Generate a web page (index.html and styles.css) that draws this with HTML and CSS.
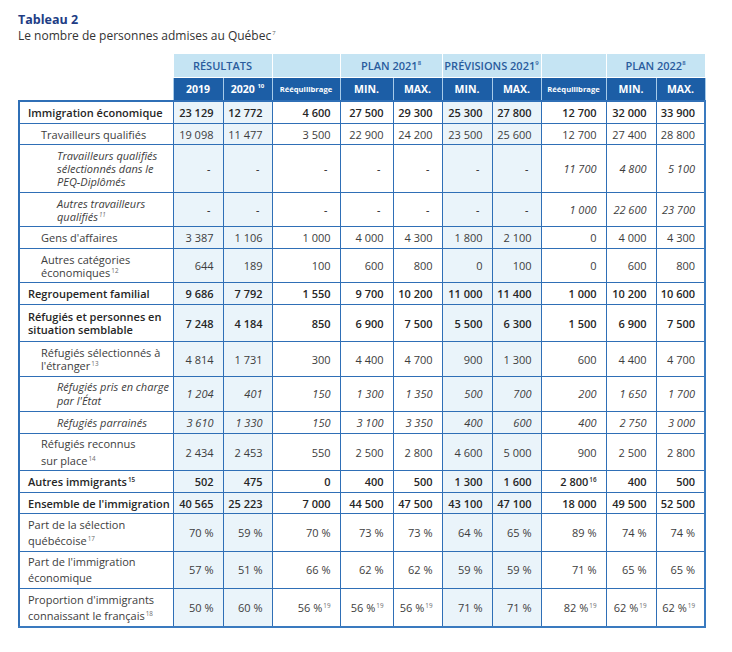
FILE: index.html
```html
<!DOCTYPE html>
<html lang="fr">
<head>
<meta charset="utf-8">
<title>Tableau 2</title>
<link rel="stylesheet" href="styles.css">
</head>
<body>
<div class="page">
  <h1 class="title">Tableau 2</h1>
  <p class="subtitle">Le nombre de personnes admises au Québec<sup>7</sup></p>
  <table class="tbl">
    <colgroup>
      <col class="c-lbl"><col class="c-50"><col class="c-49"><col class="c-68"><col class="c-53"><col class="c-49"><col class="c-50"><col class="c-49"><col class="c-65"><col class="c-50"><col class="c-49">
    </colgroup>
    <thead>
      <tr class="band">
        <th class="blank"></th>
        <th colspan="2">RÉSULTATS</th>
        <th></th>
        <th colspan="2">PLAN 2021<sup>8</sup></th>
        <th colspan="2">PRÉVISIONS 2021<sup>9</sup></th>
        <th></th>
        <th colspan="2">PLAN 2022<sup>8</sup></th>
      </tr>
      <tr class="head">
        <th class="blank"></th>
        <th>2019</th>
        <th>2020 <sup>10</sup></th>
        <th class="small">Rééquilibrage</th>
        <th>MIN.</th>
        <th>MAX.</th>
        <th>MIN.</th>
        <th>MAX.</th>
        <th class="small">Rééquilibrage</th>
        <th>MIN.</th>
        <th>MAX.</th>
      </tr>
    </thead>
    <tbody>
      <tr class="sec first">
        <td class="lbl">Immigration économique</td>
        <td>23&nbsp;129</td><td>12&nbsp;772</td><td>4&nbsp;600</td><td>27&nbsp;500</td><td>29&nbsp;300</td><td>25&nbsp;300</td><td>27&nbsp;800</td><td>12&nbsp;700</td><td>32&nbsp;000</td><td>33&nbsp;900</td>
      </tr>
      <tr class="l2">
        <td class="lbl">Travailleurs qualifiés</td>
        <td>19&nbsp;098</td><td>11&nbsp;477</td><td>3&nbsp;500</td><td>22&nbsp;900</td><td>24&nbsp;200</td><td>23&nbsp;500</td><td>25&nbsp;600</td><td>12&nbsp;700</td><td>27&nbsp;400</td><td>28&nbsp;800</td>
      </tr>
      <tr class="l3">
        <td class="lbl">Travailleurs qualifiés<br>sélectionnés dans le<br>PEQ-Diplômés</td>
        <td class="dash">-</td><td class="dash">-</td><td class="dash">-</td><td class="dash">-</td><td class="dash">-</td><td class="dash">-</td><td class="dash">-</td><td>11&nbsp;700</td><td>4&nbsp;800</td><td>5&nbsp;100</td>
      </tr>
      <tr class="l3">
        <td class="lbl">Autres travailleurs<br>qualifiés<sup>11</sup></td>
        <td class="dash">-</td><td class="dash">-</td><td class="dash">-</td><td class="dash">-</td><td class="dash">-</td><td class="dash">-</td><td class="dash">-</td><td>1&nbsp;000</td><td>22&nbsp;600</td><td>23&nbsp;700</td>
      </tr>
      <tr class="l2">
        <td class="lbl">Gens d'affaires</td>
        <td>3&nbsp;387</td><td>1&nbsp;106</td><td>1&nbsp;000</td><td>4&nbsp;000</td><td>4&nbsp;300</td><td>1&nbsp;800</td><td>2&nbsp;100</td><td>0</td><td>4&nbsp;000</td><td>4&nbsp;300</td>
      </tr>
      <tr class="l2">
        <td class="lbl">Autres catégories<br>économiques<sup>12</sup></td>
        <td>644</td><td>189</td><td>100</td><td>600</td><td>800</td><td>0</td><td>100</td><td>0</td><td>600</td><td>800</td>
      </tr>
      <tr class="sec">
        <td class="lbl">Regroupement familial</td>
        <td>9&nbsp;686</td><td>7&nbsp;792</td><td>1&nbsp;550</td><td>9&nbsp;700</td><td>10&nbsp;200</td><td>11&nbsp;000</td><td>11&nbsp;400</td><td>1&nbsp;000</td><td>10&nbsp;200</td><td>10&nbsp;600</td>
      </tr>
      <tr class="sec pad6">
        <td class="lbl">Réfugiés et personnes en<br>situation semblable</td>
        <td>7&nbsp;248</td><td>4&nbsp;184</td><td>850</td><td>6&nbsp;900</td><td>7&nbsp;500</td><td>5&nbsp;500</td><td>6&nbsp;300</td><td>1&nbsp;500</td><td>6&nbsp;900</td><td>7&nbsp;500</td>
      </tr>
      <tr class="l2">
        <td class="lbl">Réfugiés sélectionnés à<br>l'étranger<sup>13</sup></td>
        <td>4&nbsp;814</td><td>1&nbsp;731</td><td>300</td><td>4&nbsp;400</td><td>4&nbsp;700</td><td>900</td><td>1&nbsp;300</td><td>600</td><td>4&nbsp;400</td><td>4&nbsp;700</td>
      </tr>
      <tr class="l3 lh14">
        <td class="lbl">Réfugiés pris en charge<br>par l'État</td>
        <td>1&nbsp;204</td><td>401</td><td>150</td><td>1&nbsp;300</td><td>1&nbsp;350</td><td>500</td><td>700</td><td>200</td><td>1&nbsp;650</td><td>1&nbsp;700</td>
      </tr>
      <tr class="l3">
        <td class="lbl">Réfugiés parrainés</td>
        <td>3&nbsp;610</td><td>1&nbsp;330</td><td>150</td><td>3&nbsp;100</td><td>3&nbsp;350</td><td>400</td><td>600</td><td>400</td><td>2&nbsp;750</td><td>3&nbsp;000</td>
      </tr>
      <tr class="l2 lh17">
        <td class="lbl">Réfugiés reconnus<br>sur place<sup>14</sup></td>
        <td>2&nbsp;434</td><td>2&nbsp;453</td><td>550</td><td>2&nbsp;500</td><td>2&nbsp;800</td><td>4&nbsp;600</td><td>5&nbsp;000</td><td>900</td><td>2&nbsp;500</td><td>2&nbsp;800</td>
      </tr>
      <tr class="sec">
        <td class="lbl">Autres immigrants<sup>15</sup></td>
        <td>502</td><td>475</td><td>0</td><td>400</td><td>500</td><td>1&nbsp;300</td><td>1&nbsp;600</td><td>2&nbsp;800<sup>16</sup></td><td>400</td><td>500</td>
      </tr>
      <tr class="sec">
        <td class="lbl">Ensemble de l'immigration</td>
        <td>40&nbsp;565</td><td>25&nbsp;223</td><td>7&nbsp;000</td><td>44&nbsp;500</td><td>47&nbsp;500</td><td>43&nbsp;100</td><td>47&nbsp;100</td><td>18&nbsp;000</td><td>49&nbsp;500</td><td>52&nbsp;500</td>
      </tr>
      <tr class="l1 lh16">
        <td class="lbl">Part de la sélection<br>québécoise<sup>17</sup></td>
        <td>70&nbsp;%</td><td>59&nbsp;%</td><td>70&nbsp;%</td><td>73&nbsp;%</td><td>73&nbsp;%</td><td>64&nbsp;%</td><td>65&nbsp;%</td><td>89&nbsp;%</td><td>74&nbsp;%</td><td>74&nbsp;%</td>
      </tr>
      <tr class="l1 lh16">
        <td class="lbl">Part de l'immigration<br>économique</td>
        <td>57&nbsp;%</td><td>51&nbsp;%</td><td>66&nbsp;%</td><td>62&nbsp;%</td><td>62&nbsp;%</td><td>59&nbsp;%</td><td>59&nbsp;%</td><td>71&nbsp;%</td><td>65&nbsp;%</td><td>65&nbsp;%</td>
      </tr>
      <tr class="l1 lh16">
        <td class="lbl">Proportion d'immigrants<br>connaissant le français<sup>18</sup></td>
        <td>50&nbsp;%</td><td>60&nbsp;%</td><td>56&nbsp;%<sup>19</sup></td><td>56&nbsp;%<sup>19</sup></td><td>56&nbsp;%<sup>19</sup></td><td>71&nbsp;%</td><td>71&nbsp;%</td><td>82&nbsp;%<sup>19</sup></td><td>62&nbsp;%<sup>19</sup></td><td>62&nbsp;%<sup>19</sup></td>
      </tr>
    </tbody>
  </table>
</div>
</body>
</html>
```
FILE: styles.css
```css
html, body {
  margin: 0;
  padding: 0;
  background: #ffffff;
}

body {
  font-family: "Open Sans", "DejaVu Sans", sans-serif;
  color: #3d3d3d;
}

.page {
  padding: 12px 0 0 18px;
}

.title {
  margin: 0;
  font-size: 12.5px;
  line-height: 16px;
  font-weight: 700;
  color: #213c84;
}

.subtitle {
  margin: 0;
  font-size: 12px;
  line-height: 16px;
  color: #333333;
}

.subtitle sup {
  font-size: 6px;
  line-height: 0;
  vertical-align: 5px;
  color: #666666;
  margin-left: 1px;
}

.tbl {
  margin-top: 10px;
  border-collapse: collapse;
  table-layout: fixed;
  width: 687px;
  font-size: 11px;
}

.c-lbl { width: 154px; }
.c-50 { width: 50px; }
.c-49 { width: 49px; }
.c-68 { width: 68px; }
.c-53 { width: 53px; }
.c-65 { width: 65px; }

/* header */
.band th {
  height: 23px;
  padding: 0;
  background: #c5e4f3;
  color: #2a5c9d;
  font-weight: 600;
  font-size: 11px;
  text-align: center;
  border-left: 1px solid #ffffff;
  border-right: 1px solid #ffffff;
  border-bottom: 1px solid #ffffff;
}

.band th sup,
.head th sup {
  font-size: 6px;
  line-height: 0;
  vertical-align: 5px;
}

.head th {
  height: 22px;
  padding: 0;
  background: #1c5ea6;
  color: #ffffff;
  font-weight: 700;
  font-size: 10.5px;
  text-align: center;
  border-left: 1px solid #a7cbe9;
  border-right: 1px solid #a7cbe9;
}

.head th.small {
  font-size: 7.6px;
}

.band th.blank,
.head th.blank {
  background: transparent;
  border: none;
}

/* body */
.tbl td {
  border: 1px solid #2f6fb6;
  padding: 4px 9px 3.5px 4px;
  line-height: 13px;
  text-align: right;
  vertical-align: middle;
  white-space: nowrap;
}

.tbl tbody td:nth-child(2),
.tbl tbody td:nth-child(3),
.tbl tbody td:nth-child(7),
.tbl tbody td:nth-child(8) {
  background: #eaf4fa;
}

.tbl tbody td:first-child {
  border-left: 2px solid #2f6fb6;
}

.tbl tbody td:last-child {
  border-right: 2px solid #3a7abf;
}

.tbl tbody tr:last-child td {
  border-bottom: 2px solid #3a7abf;
}

.tbl tbody tr.first td {
  border-top: 2px solid #2f6fb6;
}

.tbl td.lbl {
  text-align: left;
  padding-left: 8px;
  padding-right: 2px;
}

.tbl td.dash {
  padding-right: 12px;
}

.tbl td sup {
  font-size: 6.3px;
  line-height: 0;
  vertical-align: 4px;
  color: #6a6a6a;
  margin-left: 1px;
}

.sec td {
  font-weight: 600;
  color: #262626;
}

.sec td sup {
  color: #262626;
}

.l2 td.lbl {
  padding-left: 21px;
}

.l3 td {
  font-style: italic;
}

.l3 td.lbl {
  padding-left: 37px;
}

.pad6 td {
  padding-top: 5.5px;
  padding-bottom: 5px;
}

.lh14 td {
  line-height: 14px;
  padding-top: 3.5px;
  padding-bottom: 3px;
}

.lh17 td {
  line-height: 17px;
  padding-top: 1.5px;
  padding-bottom: 1px;
}

.lh16 td {
  line-height: 16px;
  padding-top: 2.5px;
  padding-bottom: 2px;
}
```
